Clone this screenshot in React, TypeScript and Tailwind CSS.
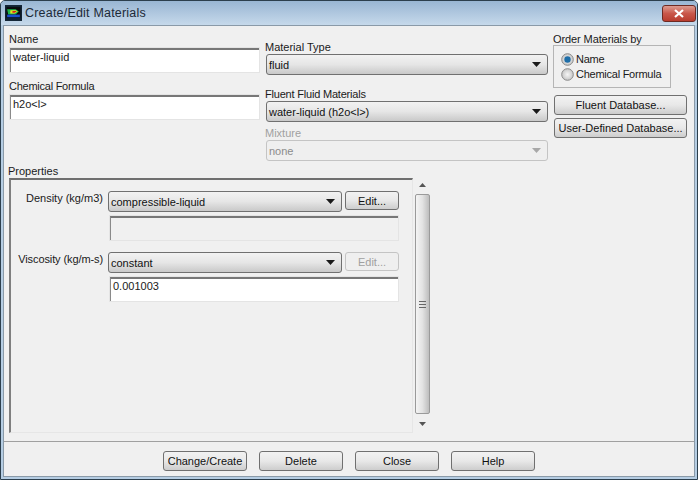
const font = 'font-["Liberation_Sans",sans-serif]';

function Arrow({ disabled }: { disabled?: boolean }) {
  return (
    <svg width="9" height="5" viewBox="0 0 9 5" className="shrink-0">
      <path d="M0 0h9L4.5 5z" fill={disabled ? '#a8a8a8' : '#1a1a1a'} />
    </svg>
  );
}

function Select({ value, disabled, className }: { value: string; disabled?: boolean; className: string }) {
  return (
    <div
      className={`flex h-[21px] items-center justify-between rounded-[3px] border pl-[2px] pr-[6px] ${className} ${
        disabled
          ? 'border-[#c4c4c4] bg-[#efefef] text-[#8b8b8b]'
          : 'border-[#707070] bg-gradient-to-b from-[#f2f2f2] via-[#e6e6e6] to-[#c9c9c9] text-[#111]'
      }`}
    >
      <span className="whitespace-pre">{value}</span>
      <Arrow disabled={disabled} />
    </div>
  );
}

function Btn({ label, disabled, className }: { label: string; disabled?: boolean; className: string }) {
  return (
    <div
      className={`flex items-center justify-center whitespace-nowrap rounded-[3px] border ${className} ${
        disabled
          ? 'border-[#c4c4c4] bg-[#efefef] text-[#a0a0a0]'
          : 'border-[#707070] bg-gradient-to-b from-[#f2f2f2] via-[#e8e8e8] to-[#cdcdcd] text-[#111]'
      }`}
    >
      {label}
    </div>
  );
}

function TextBox({ value, className }: { value: string; className: string }) {
  return (
    <div className={`border border-[#e4e4e4] ${className}`}>
      <div className="h-full border-t-2 border-l border-t-[#777] border-l-[#8a8a8a] pl-[2px] pt-[1px] leading-[13px]">
        {value}
      </div>
    </div>
  );
}

function Radio({ on, label }: { on?: boolean; label: string }) {
  return (
    <div className="flex h-[15px] items-center gap-[2px] whitespace-nowrap">
      <svg width="13" height="13" viewBox="0 0 13 13" className="shrink-0">
        <defs>
          <radialGradient id="rb" cx="50%" cy="50%" r="60%">
            <stop offset="0%" stopColor="#f5f5f5" />
            <stop offset="100%" stopColor="#bdbdbd" />
          </radialGradient>
        </defs>
        <circle cx="6.5" cy="6.5" r="5.8" fill="url(#rb)" stroke="#8a8a8a" />
        {on && <circle cx="6.5" cy="6.5" r="3.2" fill="#1f6ea8" />}
      </svg>
      <span className="tracking-[-0.25px]">{label}</span>
    </div>
  );
}

export default function App() {
  return (
    <div className={`${font} flex h-[480px] w-[698px] flex-col overflow-hidden rounded-t-[5px] border border-[#2c3f4d] bg-[#b5cde3] text-[11px] text-[#1a1a1a]`}>
      {/* Title bar */}
      <div className="flex h-[24px] shrink-0 items-start justify-between bg-gradient-to-b from-[#99b6d3] to-[#c6d9eb]">
        <div className="flex items-center gap-[3px] pl-[4px] pt-[3px]">
          <svg width="17" height="16" viewBox="0 0 16 15">
            <rect width="16" height="15" fill="#123" />
            <rect x="1.5" y="2" width="13" height="10" fill="#0a0a0a" />
            <path d="M2 4h8l3 2-3 3H3z" fill="#1fb84a" />
            <path d="M5 5h5l2 1-3 2H5z" fill="#e8e020" />
            <path d="M7 5.5h3l1 .7-2 1H7z" fill="#d8261c" />
            <rect x="2" y="9" width="12" height="2.5" fill="#1a4fd0" />
          </svg>
          <span className="text-[12.5px] tracking-[0.2px] text-[#1c2a38]">Create/Edit Materials</span>
        </div>
        <div className="mr-[1px] mt-[4px] flex h-[17px] w-[34px] items-center justify-center rounded-[3px] border border-[#6e2a22] bg-gradient-to-b from-[#dc9b90] via-[#c9574a] to-[#b83c2e]">
          <svg width="12" height="9" viewBox="0 0 12 9">
            <path d="M2 1l8 7M10 1L2 8" stroke="#fff" strokeWidth="2.2" />
          </svg>
        </div>
      </div>

      {/* Client area */}
      <div className="mx-[2px] flex h-[452px] shrink-0 flex-col border border-[#8a9aa8] bg-[#f0f0f0]">
        <div className="flex h-[139px] shrink-0">
          <div className="ml-[5px] flex w-[251px] flex-col pt-[6px] leading-[14px]">
            <div className="h-[14px]">Name</div>
            <TextBox value="water-liquid" className="mt-[1px] h-[26px] bg-white" />
            <div className="mt-[6px] h-[14px] tracking-[-0.25px]">Chemical Formula</div>
            <TextBox value="h2o<l>" className="mt-[1px] h-[26px] bg-white" />
          </div>
          <div className="ml-[6px] flex w-[282px] flex-col pt-[14px] leading-[14px]">
            <div className="h-[14px] -ml-[1px]">Material Type</div>
            <Select value="fluid" className="w-full" />
            <div className="mt-[12px] h-[14px] -ml-[1px] tracking-[-0.2px]">Fluent Fluid Materials</div>
            <Select value="water-liquid (h2o<l>)" className="w-full" />
            <div className="mt-[4px] h-[14px] -ml-[1px] text-[#a0a0a0]">Mixture</div>
            <Select value="none" disabled className="w-full" />
          </div>
          <div className="ml-[5px] flex w-[134px] flex-col pt-[6px] leading-[14px]">
            <div className="h-[13px] tracking-[-0.1px]">Order Materials by</div>
            <div className="flex h-[43px] w-[118px] flex-col justify-center border border-[#b5b5b5] pl-[7px]">
              <Radio on label="Name" />
              <Radio label="Chemical Formula" />
            </div>
            <Btn label="Fluent Database..." className="ml-[1px] mt-[7px] h-[20px] w-[133px]" />
            <Btn label="User-Defined Database..." className="ml-[1px] mt-[3px] h-[20px] w-[133px]" />
          </div>
        </div>

        {/* Properties */}
        <div className="ml-[4px] h-[13px] shrink-0 leading-[13px]">Properties</div>
        <div className="ml-[5px] flex h-[255px] shrink-0">
          <div className="flex h-full w-[404px] flex-col border-t-2 border-l-2 border-r border-b border-t-[#6f6f6f] border-l-[#7f7f7f] border-r-[#e6e6e6] border-b-[#e6e6e6] pt-[11px] leading-[14px]">
            <div className="flex">
              <div className="w-[92px] text-right">Density (kg/m3)</div>
              <div className="ml-[5px] flex flex-col">
                <div className="flex gap-[3px]">
                  <Select value="compressible-liquid" className="w-[234px]" />
                  <Btn label="Edit..." className="h-[19px] w-[54px]" />
                </div>
                <TextBox value="" className="ml-[1px] mt-[3px] h-[26px] w-[290px]" />
              </div>
            </div>
            <div className="mt-[11px] flex">
              <div className="w-[92px] text-right tracking-[-0.1px]">Viscosity (kg/m-s)</div>
              <div className="ml-[5px] flex flex-col">
                <div className="flex gap-[3px]">
                  <Select value="constant" className="w-[234px]" />
                  <Btn label="Edit..." disabled className="h-[19px] w-[54px]" />
                </div>
                <TextBox value="0.001003" className="ml-[1px] mt-[3px] h-[26px] w-[290px] bg-white" />
              </div>
            </div>
          </div>
          {/* Scrollbar */}
          <div className="ml-[1px] flex w-[16px] flex-col items-center pt-[5px]">
            <svg width="7" height="4" viewBox="0 0 7 4"><path d="M3.5 0L7 4H0z" fill="#555" /></svg>
            <div className="mt-[7px] flex h-[220px] w-[15px] items-center justify-center rounded-[2px] border border-[#9a9a9a] bg-gradient-to-r from-[#f4f4f4] via-[#e2e2e2] to-[#bdbdbd]">
              <svg width="7" height="7" viewBox="0 0 7 7">
                <path d="M0 .5h7M0 3.5h7M0 6.5h7" stroke="#666" />
              </svg>
            </div>
            <svg width="7" height="4" viewBox="0 0 7 4" className="mt-[8px]"><path d="M0 0h7L3.5 4z" fill="#555" /></svg>
          </div>
        </div>

        {/* Footer */}
        <div className="mt-[8px] flex h-[36px] shrink-0 gap-[12px] border-t border-[#a0a0a0] pl-[159px] pt-[9px]">
          <Btn label="Change/Create" className="h-[20px] w-[84px]" />
          <Btn label="Delete" className="h-[20px] w-[84px]" />
          <Btn label="Close" className="h-[20px] w-[84px]" />
          <Btn label="Help" className="h-[20px] w-[84px]" />
        </div>
      </div>
    </div>
  );
}
